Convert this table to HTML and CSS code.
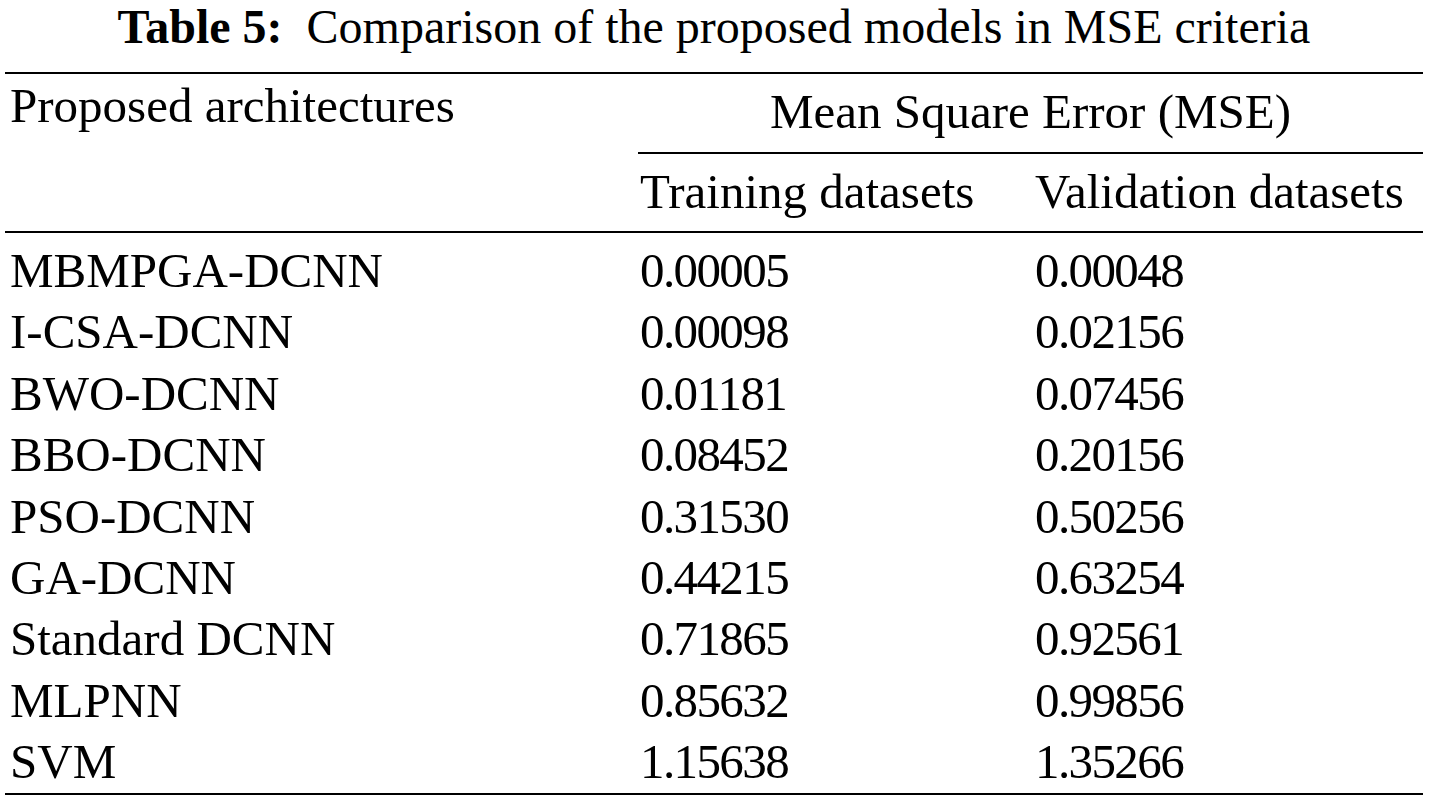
FILE: index.html
```html
<!DOCTYPE html>
<html lang="en">
<head>
<meta charset="utf-8">
<title>Table 5</title>
<link rel="stylesheet" href="styles.css">
</head>
<body>
<div class="wrap">
  <div class="caption"><span class="label">Table 5:</span>&nbsp; Comparison of the proposed models in MSE criteria</div>
  <table class="mse">
    <colgroup>
      <col class="c1">
      <col class="c2">
      <col class="c3">
    </colgroup>
    <thead>
      <tr>
        <th class="arch" rowspan="2">Proposed architectures</th>
        <th class="group" colspan="2">Mean Square Error (MSE)</th>
      </tr>
      <tr>
        <th class="sub">Training datasets</th>
        <th class="sub">Validation datasets</th>
      </tr>
    </thead>
    <tbody>
      <tr><td>MBMPGA-DCNN</td><td class="num">0.00005</td><td class="num">0.00048</td></tr>
      <tr><td>I-CSA-DCNN</td><td class="num">0.00098</td><td class="num">0.02156</td></tr>
      <tr><td>BWO-DCNN</td><td class="num">0.01181</td><td class="num">0.07456</td></tr>
      <tr><td>BBO-DCNN</td><td class="num">0.08452</td><td class="num">0.20156</td></tr>
      <tr><td>PSO-DCNN</td><td class="num">0.31530</td><td class="num">0.50256</td></tr>
      <tr><td>GA-DCNN</td><td class="num">0.44215</td><td class="num">0.63254</td></tr>
      <tr><td>Standard DCNN</td><td class="num">0.71865</td><td class="num">0.92561</td></tr>
      <tr><td>MLPNN</td><td class="num">0.85632</td><td class="num">0.99856</td></tr>
      <tr><td>SVM</td><td class="num">1.15638</td><td class="num">1.35266</td></tr>
    </tbody>
  </table>
</div>
</body>
</html>
```

FILE: styles.css
```css
html, body {
  margin: 0;
  padding: 0;
  background: #ffffff;
}

body {
  font-family: "Liberation Serif", "Times New Roman", serif;
  font-size: 49px;
  color: #000000;
}

.wrap {
  width: 1418px;
  margin-left: 5px;
}

.caption {
  text-align: center;
  font-size: 48px;
  line-height: 53px;
  height: 53px;
  margin-bottom: 19px;
  white-space: nowrap;
}

.caption .label {
  font-weight: bold;
}

.mse {
  width: 1418px;
  border-collapse: separate;
  border-spacing: 0;
  table-layout: fixed;
  border-top: 2px solid #000;
  border-bottom: 2px solid #000;
}

.mse col.c1 { width: 633px; }
.mse col.c2 { width: 395px; }
.mse col.c3 { width: 390px; }

.mse th,
.mse td {
  font-weight: normal;
  text-align: left;
  padding: 0 0 0 2px;
  white-space: nowrap;
}

.mse th.arch {
  vertical-align: top;
  line-height: 63px;
  padding-left: 5px;
  border-bottom: 2px solid #000;
}

.mse th.group {
  text-align: center;
  line-height: 75px;
  padding: 0 0 3px 0;
  border-bottom: 2px solid #000;
}

.mse th.sub {
  line-height: 75px;
  padding-bottom: 2px;
  border-bottom: 2px solid #000;
}

.mse td {
  line-height: 61.4px;
}

.mse td:first-child {
  padding-left: 5px;
}

.mse td.num {
  letter-spacing: -1.6px;
}

.mse tbody tr:first-child td {
  padding-top: 7px;
}
```
